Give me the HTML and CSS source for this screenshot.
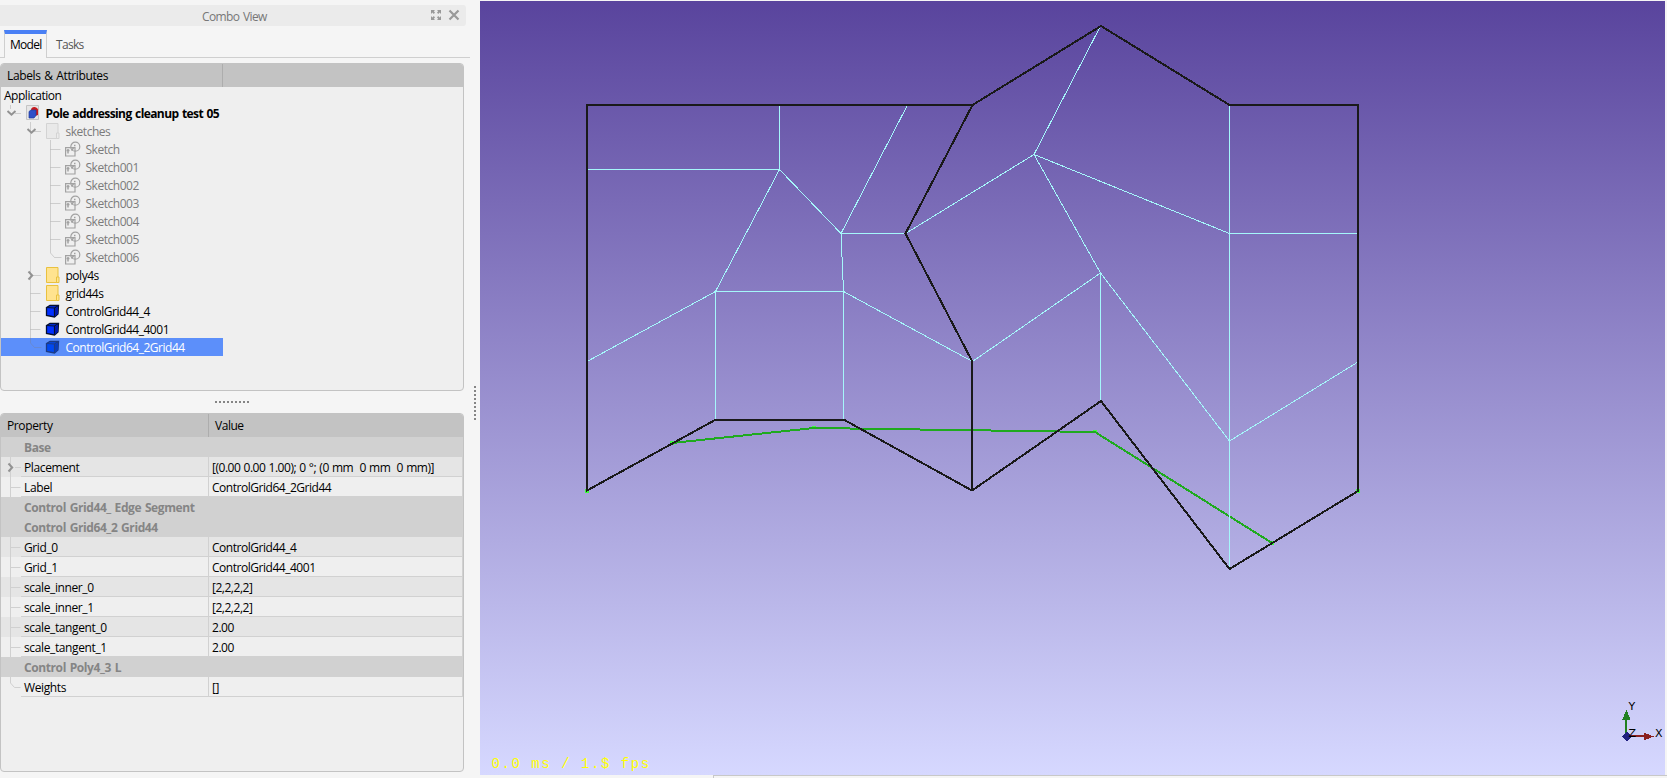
FILE: index.html
```html
<!DOCTYPE html>
<html lang="en">
<head>
<meta charset="utf-8">
<title>Combo View</title>
<link rel="stylesheet" href="styles.css">
</head>
<body>
<svg width="0" height="0" class="defs">
  <defs>
    <symbol id="sketch" viewBox="0 0 16 16"><g fill="none" stroke="#a2a2a2" stroke-width="1.2"><circle cx="10.300" cy="5.700" r="4.500"/><path d="M.6 6.600h9.400v8.400H.6z"/><path d="M3 8v4.500M1.500 9.500h3M6.500 9.500l2-2.500M9 4.500h1.500" stroke-width="1.500"/></g></symbol>
    <symbol id="folder" viewBox="0 0 16 16"><path d="M1.500.5H13v15H1.500z" fill="#ffe38f" stroke="#e9c13f"/><path d="M11.500 10h2.500v5.500h-2.500z" fill="#ffe58f" stroke="#e9c13f"/></symbol>
    <symbol id="folder-off" viewBox="0 0 16 16"><path d="M1.500.5H13v15H1.500z" fill="#e9e9e9" stroke="#d3d3d3"/><path d="M11.500 10h2.500v5.500h-2.500z" fill="#ececec" stroke="#d3d3d3"/></symbol>
    <symbol id="cube" viewBox="0 0 16 16"><path d="M1.500 4.500 5 2.500h8.500L13 11l-3.500 3-8-1.500z" fill="#0030ff" stroke="#06102f" stroke-width="1.300"/><path d="M1.500 4.500l8 .5v9M9.500 5l4-2.500" fill="none" stroke="#06102f" stroke-width="1.200"/><path d="M10 5.500 13 3.500V10.500l-3 3z" fill="#0018a8"/></symbol>
    <symbol id="cube-sel" viewBox="0 0 16 16"><path d="M1.500 4.500 5 2.500h8.500L13 11l-3.500 3-8-1.500z" fill="#0048f0" stroke="#1c3c86" stroke-width="1.300"/><path d="M1.500 4.500l8 .5v9M9.500 5l4-2.500" fill="none" stroke="#1c3c86" stroke-width="1.200"/><path d="M10 5.500 13 3.500V10.500l-3 3z" fill="#0a3cb8"/></symbol>
    <symbol id="doc" viewBox="0 0 16 16"><path d="M1.500.5h12v14h-12z" fill="#e6e6e6" stroke="#c4c4c4"/><path d="M6 5c0-4 6-4 7-.5V10l-3 1z" fill="#c8191c"/><path d="M4 6.500l2-1.500h5v5.500L9 13H4z" fill="#2f50c8" stroke="#223c9c" stroke-width=".7"/></symbol>
  </defs>
</svg>
<div class="app">
  <aside class="side">
    <div class="title"><span class="title-text">Combo View</span>
      <svg class="title-icons" width="30" height="12" viewBox="0 0 30 12"><g fill="#999"><path d="M1 1h4L3.800 2.200 5 3.500 3.800 5 2.400 3.600 1 5zM11 1H7l1.200 1.200L7 3.500 8.200 5l1.400-1.400L11 5zM1 11h4L3.800 9.800 5 8.500 3.800 7 2.400 8.400 1 7zM11 11H7l1.200-1.200L7 8.500 8.200 7l1.400 1.400L11 7z"/></g><path d="M19.500 1.500l9 9M28.500 1.500l-9 9" stroke="#999" stroke-width="2.200"/></svg>
    </div>
    <div class="tabs"><div class="tab active">Model</div><div class="tab tasks">Tasks</div></div>
    <section class="frame tree">
      <div class="head"><span class="h1">Labels &amp; Attributes</span><span class="h2"></span></div>
      <div class="rows">
        <div class="row l0"><span>Application</span></div>
        <div class="row l1"><svg class="ic"><use href="#doc"/></svg><b>Pole addressing cleanup test 05</b></div>
        <div class="row l2 dim"><svg class="ic"><use href="#folder-off"/></svg><span>sketches</span></div>
        <div class="row l3 dim"><svg class="ic"><use href="#sketch"/></svg><span>Sketch</span></div>
        <div class="row l3 dim"><svg class="ic"><use href="#sketch"/></svg><span>Sketch001</span></div>
        <div class="row l3 dim"><svg class="ic"><use href="#sketch"/></svg><span>Sketch002</span></div>
        <div class="row l3 dim"><svg class="ic"><use href="#sketch"/></svg><span>Sketch003</span></div>
        <div class="row l3 dim"><svg class="ic"><use href="#sketch"/></svg><span>Sketch004</span></div>
        <div class="row l3 dim"><svg class="ic"><use href="#sketch"/></svg><span>Sketch005</span></div>
        <div class="row l3 dim"><svg class="ic"><use href="#sketch"/></svg><span>Sketch006</span></div>
        <div class="row l2"><svg class="ic"><use href="#folder"/></svg><span>poly4s</span></div>
        <div class="row l2"><svg class="ic"><use href="#folder"/></svg><span>grid44s</span></div>
        <div class="row l2"><svg class="ic"><use href="#cube"/></svg><span>ControlGrid44_4</span></div>
        <div class="row l2"><svg class="ic"><use href="#cube"/></svg><span>ControlGrid44_4001</span></div>
        <div class="row l2 sel"><svg class="ic"><use href="#cube-sel"/></svg><span>ControlGrid64_2Grid44</span></div>
        <svg class="branches" width="80" height="272" viewBox="0 86 80 272">
          <path d="M10.500 105v4M15 113.500h6M30.500 122v221l4 4.500h7M34 131.500h7M33 275.500h8M30.500 293.500h10M30.500 311.500h10M30.500 329.500h10M50.500 140v113l4 4.500h7M50.500 149.500h10M50.500 167.500h10M50.500 185.500h10M50.500 203.500h10M50.500 221.500h10M50.500 239.500h10" fill="none" stroke="#7f7f7f" stroke-opacity=".3"/>
          <path d="M7.500 111l4 3.700 4-3.700M27.500 129l4 3.700 4-3.700M28.500 271.500l3.700 4-3.700 4" fill="none" stroke="#929292" stroke-width="2"/>
        </svg>
      </div>
    </section>
    <div class="hsplit"><i></i></div>
    <section class="frame props">
      <div class="head"><span class="h1 p">Property</span><span class="h2 v">Value</span></div>
      <div class="rows">
        <div class="group">Base</div>
        <div class="prop odd"><span>Placement</span><span class="vector">[(0.00 0.00 1.00); 0 °; (0 mm&nbsp; 0 mm&nbsp; 0 mm)]</span></div>
        <div class="prop"><span>Label</span><span>ControlGrid64_2Grid44</span></div>
        <div class="group">Control Grid44_ Edge Segment</div>
        <div class="group">Control Grid64_2 Grid44</div>
        <div class="prop odd"><span>Grid_0</span><span>ControlGrid44_4</span></div>
        <div class="prop"><span>Grid_1</span><span>ControlGrid44_4001</span></div>
        <div class="prop odd"><span>scale_inner_0</span><span>[2,2,2,2]</span></div>
        <div class="prop"><span>scale_inner_1</span><span>[2,2,2,2]</span></div>
        <div class="prop odd"><span>scale_tangent_0</span><span>2.00</span></div>
        <div class="prop"><span>scale_tangent_1</span><span>2.00</span></div>
        <div class="group">Control Poly4_3 L</div>
        <div class="prop"><span>Weights</span><span>[]</span></div>
        <svg class="branches" width="24" height="260" viewBox="0 437 24 260">
          <path d="M10.500 457v40M15 467.500h6M10.500 487.500h10M10.500 537v120M10.500 547.500h10M10.500 567.500h10M10.500 587.500h10M10.500 607.500h10M10.500 627.500h10M10.500 647.500h10M10.500 677v6l4 4.500h6" fill="none" stroke="#d0d0d0"/>
          <path d="M8.500 463.500l3.700 4-3.700 4" fill="none" stroke="#929292" stroke-width="2"/>
        </svg>
      </div>
    </section>
  </aside>
  <div class="vsplit"><i></i></div>
  <main class="main">
    <div class="view">
      <svg class="scene" width="1185" height="774" viewBox="480 1 1185 774" shape-rendering="crispEdges">
        <path d="M585 489h4v4h-4zM670 441h4v4h-4zM812 426h4v3h-4zM1093 430h4v3h-4zM1270 541h4v4h-4zM1356 489h4v4h-4z" fill="#3cff3c"/>
        <path d="M672 443 814 428 1095 432 1272 543" fill="none" stroke="#1faa1f" stroke-width="2"/>
        <path d="M779.500 105V169.500M587 169.500H779.500L715.500 291.500M779.500 169.500 841 233.500M907.500 105 841 233.500H905M841 233.500 843.500 291.500M587 361.500 715.500 291.500H843.500L972.500 361.500 1100.500 273 1229.500 441 1358 362M715.500 291.500V420M843.500 291.500V420M1100.500 26 1034 154.500 905.500 233.500M1034 154.500 1229.500 233.500H1358M1034 154.500 1100.500 273V401M1229.500 105V569" fill="none" stroke="#a5f7fa" stroke-width="1"/>
        <path d="M587 105H972.500L1101 26 1229.500 105H1358V491L1229.500 569 1101 401 972 490.500 844.500 420H715L587 490.500ZM972.500 105 905.500 233.500 972 361V490" fill="none" stroke="#1a1a1a" stroke-width="2"/>
        <path d="M1626 736V716" stroke="#208020" stroke-width="2"/><path d="M1626.500 709.500l-4 10h8z" fill="#208020"/>
        <path d="M1627 736h18" stroke="#8b2020" stroke-width="2"/><path d="M1653.500 736.500l-10-4v8z" fill="#8b2020"/>
        <path d="M1626.500 731.500l5 5-5 5-5-5z" fill="#202080"/>
        <g class="axis"><text x="1628.500" y="710">Y</text><text x="1655" y="737">X</text><text x="1628.500" y="737">Z</text></g>
      </svg>
      <div class="fps">0.0 ms / 1.$ fps</div>
    </div>
    <div class="bottom"><span></span></div>
  </main>
</div>
</body>
</html>
```
FILE: styles.css
```css
* { box-sizing: border-box; }
body { margin: 0; background: #f5f5f5; font: 12px/18px "Open Sans", "Noto Sans", sans-serif; letter-spacing: -0.47px; word-spacing: 1px; color: #000; overflow: hidden; white-space: nowrap; }
.defs { position: absolute; }
.app { display: flex; width: 1667px; height: 778px; }
.side { width: 470px; height: 778px; padding-top: 5px; display: flex; flex-direction: column; }
.title { width: 466px; height: 21px; background: #ebebeb; border-radius: 0 3px 3px 0; display: flex; justify-content: flex-end; align-items: center; gap: 170px; padding-right: 6px; color: #777; }
.title-text { width: 58px; padding-top: 2px; letter-spacing: -0.6px; }
.title-icons { margin-top: -1px; flex: none; }
.tabs { height: 32px; padding: 4px 0 0 4px; margin-bottom: 5px; display: flex; background: linear-gradient(#cfcfcf, #cfcfcf) bottom / 100% 1px no-repeat; }
.tab { height: 28px; line-height: 21px; padding: 4px 0 0 9px; color: #555; letter-spacing: -0.7px; }
.tab.active { width: 43px; padding: 0 0 0 5px; line-height: 21px; color: #000; background: #f5f5f5; border: 1px solid #cfcfcf; border-top: 4px solid #4a80f5; border-bottom: 0; }
.frame { width: 464px; background: #efefef; border: 1px solid #c3c3c3; border-radius: 4px; overflow: hidden; flex: none; }
.tree { height: 328px; }
.props { height: 359px; }
.head { height: 23px; line-height: 24px; background: #c3c3c3; display: flex; }
.h1 { width: 222px; padding-left: 6px; border-right: 1px solid #adadad; letter-spacing: -0.38px; }
.h1.p { width: 208px; }
.h2.v { padding-left: 6px; }
.rows { position: relative; }
.tree .rows { margin-top: -1px; }
.row { height: 18px; width: 222px; display: flex; align-items: center; gap: 5px; }
.row span, .row b { line-height: 18px; padding-top: 1px; }
.row b { letter-spacing: -0.6px; }
.l0 { padding-left: 3px; }
.l1 { padding-left: 24px; }
.l2 { padding-left: 44px; }
.l3 { padding-left: 64px; }
.ic { width: 16px; height: 16px; flex: none; margin-left: -0.5px; }
.dim { color: #7b7b7b; }
.sel { background: #5c8ffa; color: #fff; }
.branches { position: absolute; left: -1px; top: 0; pointer-events: none; }
.hsplit { height: 22px; display: flex; align-items: center; justify-content: center; padding-right: 6px; }
.hsplit i { width: 34px; height: 2px; background: repeating-linear-gradient(90deg, #858585 0 2px, transparent 2px 4px); }
.vsplit { width: 10px; padding: 386px 0 0 4px; }
.vsplit i { display: block; width: 2px; height: 34px; background: repeating-linear-gradient(#858585 0 2px, transparent 2px 4px); }
.group { height: 20px; padding-left: 23px; line-height: 21px; font-weight: 700; letter-spacing: -0.4px; color: #858585; background: #d1d1d1; }
.prop { height: 20px; line-height: 22px; display: flex; background: linear-gradient(#d1d1d1, #d1d1d1) 20px 19px / 442px 1px no-repeat; }
.prop.odd { background-color: #e5e5e5; }
.prop span { height: 20px; }
.prop span:first-child { width: 208px; padding-left: 23px; border-right: 1px solid #d1d1d1; letter-spacing: -0.38px; }
.prop span:last-child { width: 254px; padding-left: 3px; border-right: 1px solid #d1d1d1; }
.prop .vector { word-spacing: 0.5px; }
.main { width: 1187px; padding-top: 1px; }
.view { position: relative; width: 1185px; height: 774px; background: linear-gradient(#59449d, #d6d8ff); }
.scene { display: block; }
.axis { font: 11px "DejaVu Sans", sans-serif; letter-spacing: 0; fill: #000; }
.fps { position: absolute; left: 11.5px; top: 754px; font: 14px/18px "Liberation Mono", monospace; letter-spacing: 1.55px; word-spacing: 0; color: #ff0; white-space: pre; }
.bottom { height: 3px; padding-left: 233px; }
.bottom span { display: block; height: 3px; border-top: 1px solid #c8c8c8; border-left: 1px solid #c8c8c8; }
```
